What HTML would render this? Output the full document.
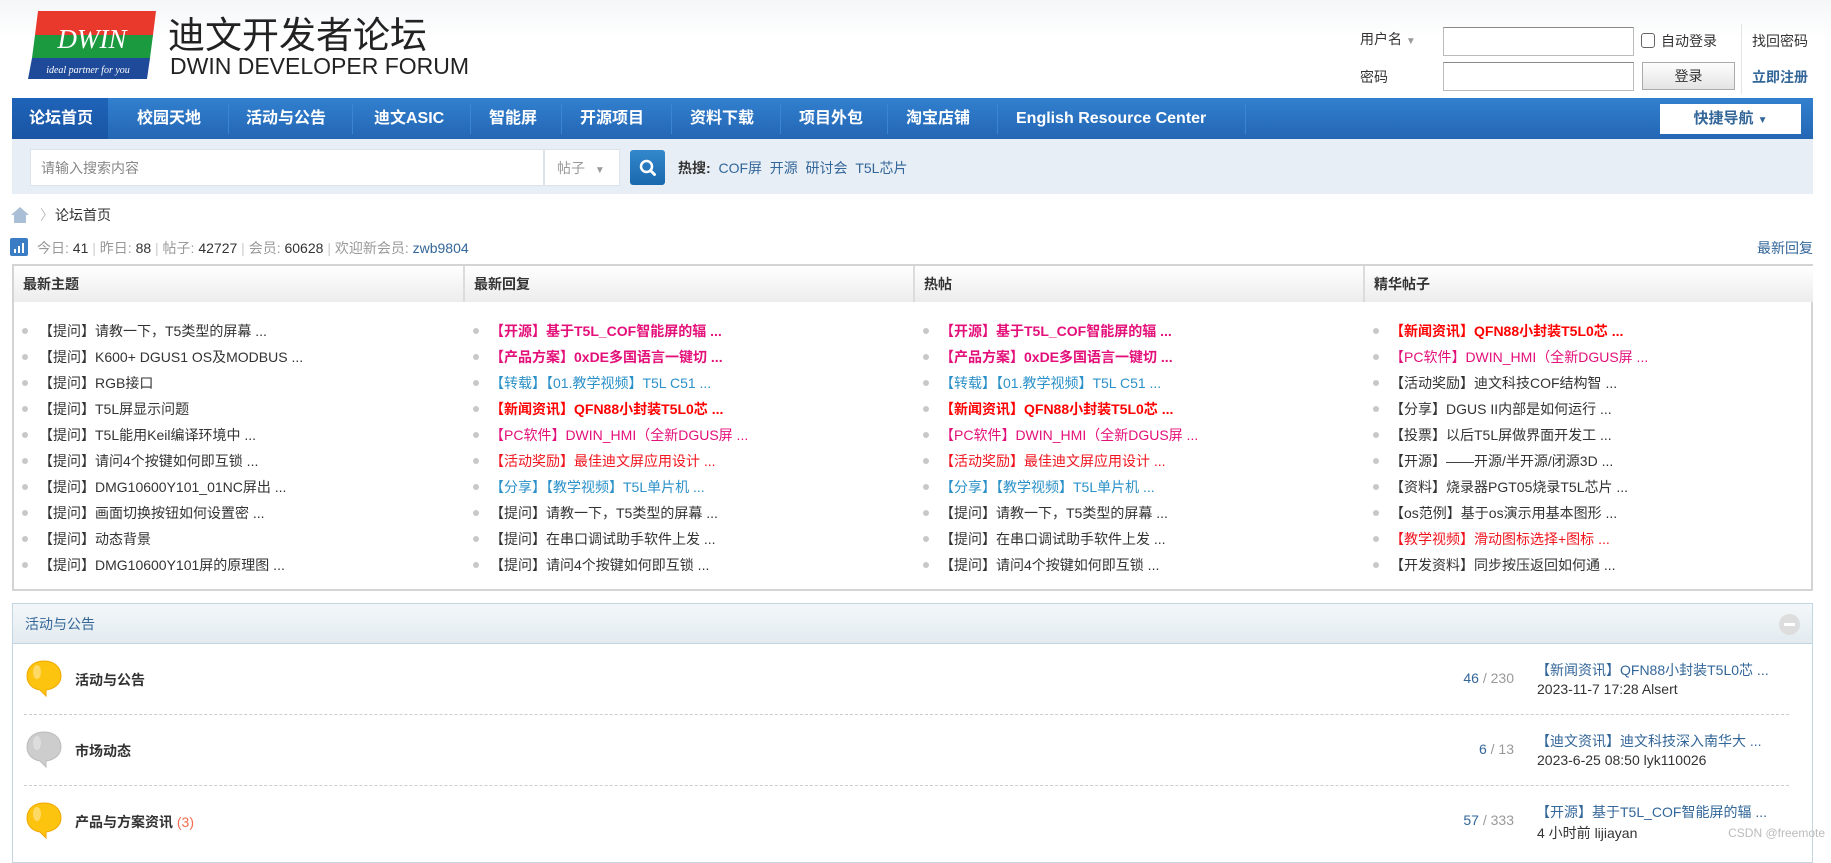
<!DOCTYPE html>
<html><head><meta charset="utf-8"><style>
*{margin:0;padding:0;box-sizing:border-box}
body{width:1831px;height:846px;overflow:hidden;background:#fff;font-family:"Liberation Sans","Noto Sans CJK SC",sans-serif;font-size:14px;color:#333;position:relative}
.a{position:absolute;white-space:nowrap}
#top{position:absolute;left:0;top:0;width:1831px;height:98px;background:linear-gradient(#f4f6f8,#fff 40%)}
.inp{position:absolute;background:#fff;border:1px solid #bbb;border-top-color:#888}
#nav{position:absolute;left:12px;top:98px;width:1801px;height:41px;background:linear-gradient(#3180cf,#2466b4)}
#nav .it{position:absolute;top:0;height:41px;line-height:41px;color:#fff;font-weight:bold;font-size:16px}
#nav .sep{position:absolute;top:6px;width:1px;height:30px;background:#1d5aa0;border-right:1px solid #3b86d2}
#sbar{position:absolute;left:12px;top:139px;width:1801px;height:55px;background:#e8eef5}
.blue{color:#336699}
#tbl{position:absolute;left:12px;top:264px;width:1801px;height:327px;border:2px solid #d4d4d4;border-top-width:2px}
.hd{position:absolute;top:0;height:36px;background:linear-gradient(#fff,#ececec);border-right:2px solid #dcdcdc;line-height:36px;font-weight:bold;font-size:14px;padding-left:9px;color:#333}
.col{position:absolute;top:52px;width:449px}
.col div{height:26px;line-height:26px;padding-left:25px;position:relative;font-size:14px}
.col div:before{content:"";position:absolute;left:8px;top:10px;width:6px;height:6px;border-radius:3px;background:#c8c8c8}
.pk{color:#e4107a;font-weight:bold}.pkn{color:#e4107a}.rd{color:#f00;font-weight:bold}.rdn{color:#f0141e}.cy{color:#2b91c8}
#sec{position:absolute;left:12px;top:603px;width:1801px;height:260px;border:1px solid #c2d5e3}
#sech{height:40px;background:linear-gradient(#f3f7f9,#e3ebf0);border-bottom:1px solid #c2d5e3;line-height:40px;padding-left:12px;color:#336699;font-size:14px}
.dash{position:absolute;left:24px;width:1765px;border-top:1px dashed #cdcdcd}
.bub{position:absolute;left:24px;width:40px;height:37px}
.ft{font-weight:bold;font-size:14px;color:#333}
</style></head><body>
<div id="top"></div>
<svg class="a" style="left:28px;top:11px" width="130" height="68" viewBox="0 0 130 68">
<polygon points="10,0 128,0 125,24 7,24" fill="#e8392c"/>
<polygon points="7,24 125,24 122,47 4,47" fill="#1c9a3f"/>
<polygon points="4,47 122,47 119,68 0,68" fill="#1f4a9a"/>
<text x="64" y="37" fill="#fff" font-family="Liberation Serif" font-style="italic" font-size="27" text-anchor="middle">DWIN</text>
<text x="60" y="62" fill="#fff" font-family="Liberation Serif" font-style="italic" font-size="10" text-anchor="middle">ideal partner for you</text>
</svg>
<div class="a" style="left:168px;top:10px;font-size:37px;color:#222;font-family:'Noto Sans CJK SC',sans-serif;line-height:44px">迪文开发者论坛</div>
<div class="a" style="left:170px;top:52px;font-size:23px;color:#222;line-height:28px">DWIN DEVELOPER FORUM</div>
<div class="a" style="left:1360px;top:29px;font-size:14px">用户名 <span style="color:#999;font-size:10px">▼</span></div>
<div class="a" style="left:1360px;top:67px;font-size:14px">密码</div>
<div class="inp" style="left:1443px;top:27px;width:191px;height:29px"></div>
<div class="inp" style="left:1443px;top:62px;width:191px;height:29px"></div>
<div class="a" style="left:1641px;top:33px;width:14px;height:15px;border:1px solid #666;border-radius:3px"></div>
<div class="a" style="left:1661px;top:31px;font-size:14px">自动登录</div>
<div class="a" style="left:1642px;top:62px;width:93px;height:28px;border:1px solid #aaa;background:linear-gradient(#fdfdfd,#e4e4e4);text-align:center;line-height:26px;font-size:14px">登录</div>
<div class="a" style="left:1741px;top:24px;width:1px;height:70px;background:#e4e4e4"></div>
<div class="a" style="left:1752px;top:31px;font-size:14px">找回密码</div>
<div class="a blue" style="left:1752px;top:67px;font-size:14px;font-weight:bold">立即注册</div>
<div id="nav">
<div style="position:absolute;left:0;top:0;width:96px;height:41px;background:linear-gradient(#1e63b8,#1a55a4)"></div>
<div class="it" style="left:17px">论坛首页</div>
<div class="it" style="left:125px">校园天地</div><div class="sep" style="left:216px"></div>
<div class="it" style="left:234px">活动与公告</div><div class="sep" style="left:340px"></div>
<div class="it" style="left:362px">迪文ASIC</div><div class="sep" style="left:458px"></div>
<div class="it" style="left:477px">智能屏</div><div class="sep" style="left:549px"></div>
<div class="it" style="left:568px">开源项目</div><div class="sep" style="left:659px"></div>
<div class="it" style="left:678px">资料下载</div><div class="sep" style="left:768px"></div>
<div class="it" style="left:787px">项目外包</div><div class="sep" style="left:875px"></div>
<div class="it" style="left:894px">淘宝店铺</div><div class="sep" style="left:985px"></div>
<div class="it" style="left:1004px">English Resource Center</div><div class="sep" style="left:1233px"></div>
<div style="position:absolute;left:1648px;top:6px;width:141px;height:30px;background:#fff;text-align:center;line-height:30px;font-size:15px;font-weight:bold;color:#336699">快捷导航 <span style="font-size:10px">▼</span></div>
</div>
<div id="sbar"></div>
<div class="inp" style="left:30px;top:149px;width:514px;height:37px;border-color:#dde3ea"></div>
<div class="a" style="left:41px;top:158px;font-size:14px;color:#888">请输入搜索内容</div>
<div class="inp" style="left:544px;top:149px;width:76px;height:37px;border-color:#dde3ea"></div>
<div class="a" style="left:557px;top:158px;font-size:14px;color:#999">帖子 <span style="font-size:10px;margin-left:6px">▼</span></div>
<div class="a" style="left:630px;top:150px;width:35px;height:35px;border-radius:3px;background:linear-gradient(#3388cc,#1a68ad)"></div>
<svg class="a" style="left:638px;top:158px" width="20" height="20" viewBox="0 0 20 20"><circle cx="8.5" cy="8.5" r="5.5" fill="none" stroke="#fff" stroke-width="2.5"/><line x1="12.5" y1="12.5" x2="16.5" y2="16.5" stroke="#fff" stroke-width="3" stroke-linecap="round"/></svg>
<div class="a" style="left:678px;top:158px;font-size:14px"><b>热搜:</b> <span class="blue">&nbsp;COF屏&nbsp;&nbsp;开源&nbsp;&nbsp;研讨会&nbsp;&nbsp;T5L芯片</span></div>
<svg class="a" style="left:10px;top:206px" width="20" height="18" viewBox="0 0 20 18"><polygon points="10,1 19,9 16,9 16,17 4,17 4,9 1,9" fill="#a9bfd6"/></svg>
<div class="a" style="left:40px;top:205px;color:#bbb;font-size:14px">〉</div>
<div class="a" style="left:55px;top:205px;font-size:14px">论坛首页</div>
<svg class="a" style="left:10px;top:238px" width="18" height="18" viewBox="0 0 18 18"><rect width="18" height="18" rx="2" fill="#3a7dc4"/><rect x="4" y="11" width="2" height="4" fill="#fff"/><rect x="8" y="8" width="2" height="7" fill="#fff"/><rect x="12" y="5" width="2" height="10" fill="#fff"/></svg>
<div class="a" style="left:37px;top:238px;font-size:14px;color:#999">今日: <span style="color:#333">41</span> <span style="color:#ccc">|</span> 昨日: <span style="color:#333">88</span> <span style="color:#ccc">|</span> 帖子: <span style="color:#333">42727</span> <span style="color:#ccc">|</span> 会员: <span style="color:#333">60628</span> <span style="color:#ccc">|</span> 欢迎新会员: <span class="blue">zwb9804</span></div>
<div class="a blue" style="right:18px;top:238px;font-size:14px">最新回复</div>
<div id="tbl">
<div class="hd" style="left:0;width:451px">最新主题</div>
<div class="hd" style="left:451px;width:450px">最新回复</div>
<div class="hd" style="left:901px;width:450px">热帖</div>
<div class="hd" style="left:1351px;width:448px;border-right:0">精华帖子</div>
<div class="col" style="left:0">
<div>【提问】请教一下，T5类型的屏幕 ...</div><div>【提问】K600+ DGUS1 OS及MODBUS ...</div><div>【提问】RGB接口</div><div>【提问】T5L屏显示问题</div><div>【提问】T5L能用Keil编译环境中 ...</div><div>【提问】请问4个按键如何即互锁 ...</div><div>【提问】DMG10600Y101_01NC屏出 ...</div><div>【提问】画面切换按钮如何设置密 ...</div><div>【提问】动态背景</div><div>【提问】DMG10600Y101屏的原理图 ...</div>
</div>
<div class="col" style="left:451px">
<div class="pk">【开源】基于T5L_COF智能屏的辐 ...</div><div class="pk">【产品方案】0xDE多国语言一键切 ...</div><div class="cy">【转载】【01.教学视频】T5L C51 ...</div><div class="rd">【新闻资讯】QFN88小封装T5L0芯 ...</div><div class="pkn">【PC软件】DWIN_HMI（全新DGUS屏 ...</div><div class="rdn">【活动奖励】最佳迪文屏应用设计 ...</div><div class="cy">【分享】【教学视频】T5L单片机 ...</div><div>【提问】请教一下，T5类型的屏幕 ...</div><div>【提问】在串口调试助手软件上发 ...</div><div>【提问】请问4个按键如何即互锁 ...</div>
</div>
<div class="col" style="left:901px">
<div class="pk">【开源】基于T5L_COF智能屏的辐 ...</div><div class="pk">【产品方案】0xDE多国语言一键切 ...</div><div class="cy">【转载】【01.教学视频】T5L C51 ...</div><div class="rd">【新闻资讯】QFN88小封装T5L0芯 ...</div><div class="pkn">【PC软件】DWIN_HMI（全新DGUS屏 ...</div><div class="rdn">【活动奖励】最佳迪文屏应用设计 ...</div><div class="cy">【分享】【教学视频】T5L单片机 ...</div><div>【提问】请教一下，T5类型的屏幕 ...</div><div>【提问】在串口调试助手软件上发 ...</div><div>【提问】请问4个按键如何即互锁 ...</div>
</div>
<div class="col" style="left:1351px">
<div class="rd">【新闻资讯】QFN88小封装T5L0芯 ...</div><div class="pkn">【PC软件】DWIN_HMI（全新DGUS屏 ...</div><div>【活动奖励】迪文科技COF结构智 ...</div><div>【分享】DGUS II内部是如何运行 ...</div><div>【投票】以后T5L屏做界面开发工 ...</div><div>【开源】——开源/半开源/闭源3D ...</div><div>【资料】烧录器PGT05烧录T5L芯片 ...</div><div>【os范例】基于os演示用基本图形 ...</div><div class="rdn">【教学视频】滑动图标选择+图标 ...</div><div>【开发资料】同步按压返回如何通 ...</div>
</div>
</div>
<div id="sec"><div id="sech">活动与公告</div></div>
<div class="a" style="left:1779px;top:614px;width:21px;height:21px;border-radius:11px;background:#ddd"></div>
<div class="a" style="left:1784px;top:623px;width:11px;height:3px;background:#fff"></div>
<svg class="bub" style="top:660px" viewBox="0 0 40 37"><path d="M20 1C10 1 3 7 3 16c0 8 6 13 13 14l6 6 0-6c8-1 15-6 15-14C37 7 30 1 20 1z" fill="#fdc40f" stroke="#f0a800"/><ellipse cx="13" cy="12" rx="4" ry="7" fill="#fde38a" opacity=".7"/></svg>
<svg class="bub" style="top:731px" viewBox="0 0 40 37"><path d="M20 1C10 1 3 7 3 16c0 8 6 13 13 14l6 6 0-6c8-1 15-6 15-14C37 7 30 1 20 1z" fill="#cdcdcd" stroke="#bbb"/><ellipse cx="13" cy="12" rx="4" ry="7" fill="#e4e4e4" opacity=".7"/></svg>
<svg class="bub" style="top:802px" viewBox="0 0 40 37"><path d="M20 1C10 1 3 7 3 16c0 8 6 13 13 14l6 6 0-6c8-1 15-6 15-14C37 7 30 1 20 1z" fill="#fdc40f" stroke="#f0a800"/><ellipse cx="13" cy="12" rx="4" ry="7" fill="#fde38a" opacity=".7"/></svg>
<div class="a ft" style="left:75px;top:670px">活动与公告</div>
<div class="a ft" style="left:75px;top:741px">市场动态</div>
<div class="a ft" style="left:75px;top:812px">产品与方案资讯 <span style="color:#f26c4f;font-weight:normal">(3)</span></div>
<div class="dash" style="top:714px"></div>
<div class="dash" style="top:785px"></div>
<div class="a" style="right:317px;top:670px;font-size:14px"><span class="blue">46</span> <span style="color:#999">/ 230</span></div>
<div class="a" style="right:317px;top:741px;font-size:14px"><span class="blue">6</span> <span style="color:#999">/ 13</span></div>
<div class="a" style="right:317px;top:812px;font-size:14px"><span class="blue">57</span> <span style="color:#999">/ 333</span></div>
<div class="a blue" style="left:1536px;top:660px;font-size:14px">【新闻资讯】QFN88小封装T5L0芯 ...</div>
<div class="a" style="left:1537px;top:681px;font-size:14px">2023-11-7 17:28 Alsert</div>
<div class="a blue" style="left:1536px;top:731px;font-size:14px">【迪文资讯】迪文科技深入南华大 ...</div>
<div class="a" style="left:1537px;top:752px;font-size:14px">2023-6-25 08:50 lyk110026</div>
<div class="a blue" style="left:1536px;top:802px;font-size:14px">【开源】基于T5L_COF智能屏的辐 ...</div>
<div class="a" style="left:1537px;top:823px;font-size:14px">4 小时前 lijiayan</div>
<div class="a" style="right:6px;top:826px;font-size:12px;color:#bbb">CSDN @freemote</div>
</body></html>
